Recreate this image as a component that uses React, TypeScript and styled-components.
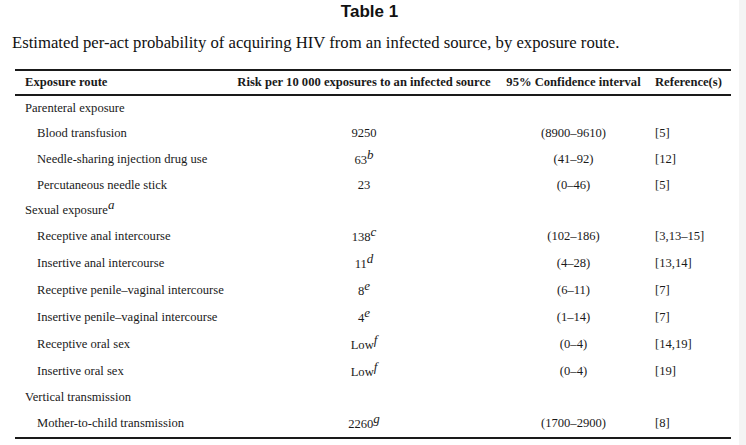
import React from 'react';
import styled, { createGlobalStyle } from 'styled-components';

const Global = createGlobalStyle`
  html, body { margin: 0; padding: 0; background: #fff; }
  body { width: 746px; height: 445px; overflow: hidden; }
`;

const Page = styled.div`
  display: flex;
  width: 746px;
  height: 445px;
`;

const Main = styled.main`
  flex: 1;
  padding-top: 4px;
`;

const Gutter = styled.div`
  width: 7px;
  background: #f4f4f4;
`;

const Title = styled.h2`
  margin: 0;
  text-align: center;
  font: bold 17px/16px "Liberation Sans", Arial, sans-serif;
  color: #111;
`;

const Caption = styled.p`
  margin: 13px 0 0 12px;
  font: 16.7px/20px "Liberation Serif", "Times New Roman", serif;
  color: #111;
`;

const Table = styled.table`
  margin: 16px 0 0 15px;
  width: 716px;
  border-collapse: collapse;
  table-layout: fixed;
  font: 12.6px/15px "Liberation Serif", "Times New Roman", serif;
  color: #1a1a1a;
  border-top: 2px solid #1a1a1a;
  border-bottom: 2px solid #1a1a1a;
`;

const HeadRow = styled.tr`
  border-bottom: 2px solid #1a1a1a;
`;

const Th = styled.th<{ $align: 'left' | 'center'; $indent?: number }>`
  font-weight: bold;
  text-align: ${p => p.$align};
  padding: 4px 0 4px ${p => p.$indent ?? 0}px;
  height: 15px;
  white-space: nowrap;
`;

const Td = styled.td<{ $align: 'left' | 'center'; $indent?: number }>`
  text-align: ${p => p.$align};
  vertical-align: middle;
  padding: 5px 0 5px ${p => p.$indent ?? 0}px;
  white-space: nowrap;
`;

const Sup = styled.sup<{ $flat?: boolean }>`
  font-style: italic;
  font-size: 13px;
  line-height: ${p => (p.$flat ? 0 : 7)}px;
  vertical-align: 5px;
`;

type Row =
  | { kind: 'group'; label: string; note?: string }
  | { kind: 'item'; label: string; risk: string; note?: string; ci: string; ref: string };

const rows: Row[] = [
  { kind: 'group', label: 'Parenteral exposure' },
  { kind: 'item', label: 'Blood transfusion', risk: '9250', ci: '(8900–9610)', ref: '[5]' },
  { kind: 'item', label: 'Needle-sharing injection drug use', risk: '63', note: 'b', ci: '(41–92)', ref: '[12]' },
  { kind: 'item', label: 'Percutaneous needle stick', risk: '23', ci: '(0–46)', ref: '[5]' },
  { kind: 'group', label: 'Sexual exposure', note: 'a' },
  { kind: 'item', label: 'Receptive anal intercourse', risk: '138', note: 'c', ci: '(102–186)', ref: '[3,13–15]' },
  { kind: 'item', label: 'Insertive anal intercourse', risk: '11', note: 'd', ci: '(4–28)', ref: '[13,14]' },
  { kind: 'item', label: 'Receptive penile–vaginal intercourse', risk: '8', note: 'e', ci: '(6–11)', ref: '[7]' },
  { kind: 'item', label: 'Insertive penile–vaginal intercourse', risk: '4', note: 'e', ci: '(1–14)', ref: '[7]' },
  { kind: 'item', label: 'Receptive oral sex', risk: 'Low', note: 'f', ci: '(0–4)', ref: '[14,19]' },
  { kind: 'item', label: 'Insertive oral sex', risk: 'Low', note: 'f', ci: '(0–4)', ref: '[19]' },
  { kind: 'group', label: 'Vertical transmission' },
  { kind: 'item', label: 'Mother-to-child transmission', risk: '2260', note: 'g', ci: '(1700–2900)', ref: '[8]' },
];

export default function App() {
  return (
    <>
      <Global />
      <Page>
        <Main>
          <Title>Table 1</Title>
          <Caption>
            Estimated per-act probability of acquiring HIV from an infected source, by exposure route.
          </Caption>
          <Table>
            <colgroup>
              <col style={{ width: 213 }} />
              <col style={{ width: 272 }} />
              <col style={{ width: 147 }} />
              <col style={{ width: 84 }} />
            </colgroup>
            <thead>
              <HeadRow>
                <Th $align="left" $indent={10}>Exposure route</Th>
                <Th $align="center">Risk per 10 000 exposures to an infected source</Th>
                <Th $align="center">95% Confidence interval</Th>
                <Th $align="left" $indent={8}>Reference(s)</Th>
              </HeadRow>
            </thead>
            <tbody>
              {rows.map(r =>
                r.kind === 'group' ? (
                  <tr key={r.label}>
                    <Td $align="left" $indent={10} colSpan={4}>
                      {r.label}
                      {r.note && <Sup $flat>{r.note}</Sup>}
                    </Td>
                  </tr>
                ) : (
                  <tr key={r.label}>
                    <Td $align="left" $indent={22}>{r.label}</Td>
                    <Td $align="center">
                      {r.risk}
                      {r.note && <Sup>{r.note}</Sup>}
                    </Td>
                    <Td $align="center">{r.ci}</Td>
                    <Td $align="left" $indent={8}>{r.ref}</Td>
                  </tr>
                )
              )}
            </tbody>
          </Table>
        </Main>
        <Gutter />
      </Page>
    </>
  );
}
